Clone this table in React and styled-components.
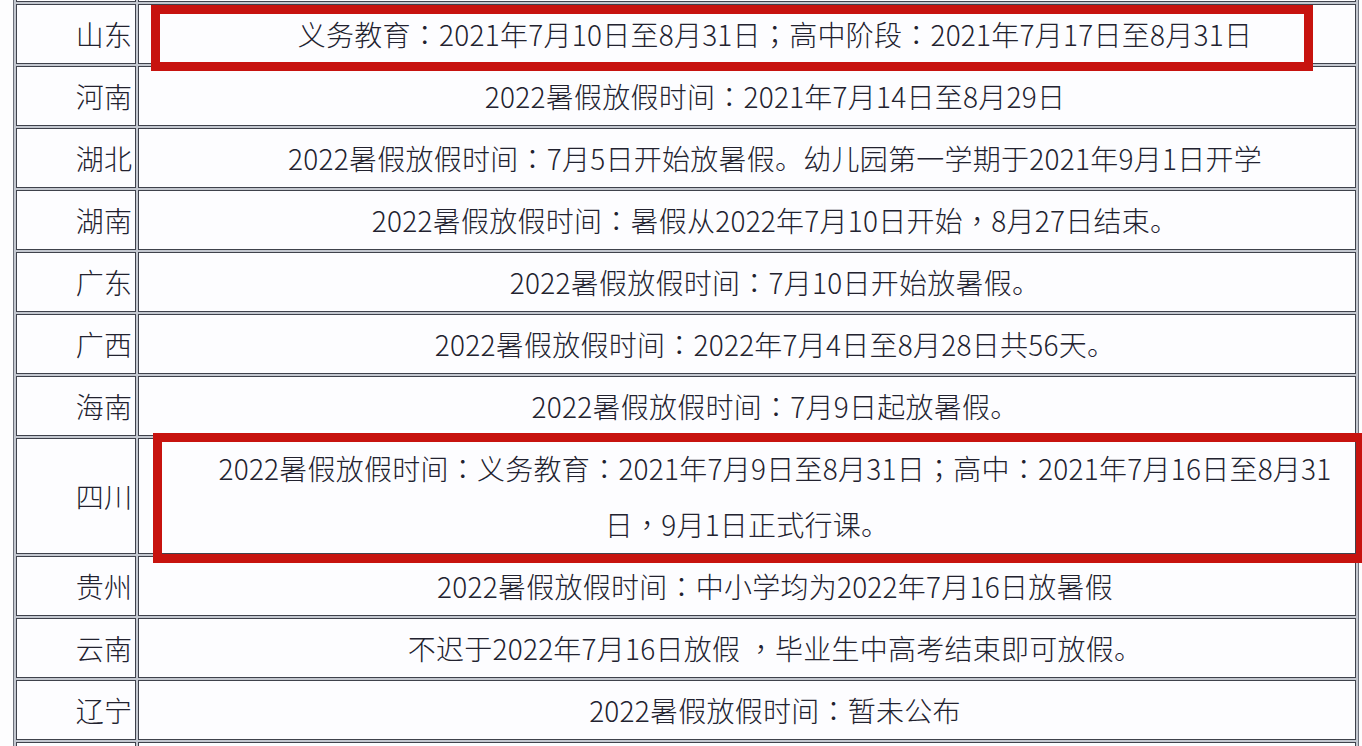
import React from "react";
import styled, { createGlobalStyle } from "styled-components";

const Global = createGlobalStyle`
  html, body {
    margin: 0;
    padding: 0;
    background: #fdfdfe;
    overflow: hidden;
  }
  body {
    width: 1362px;
    height: 746px;
    font-family: "Noto Sans CJK SC", "Noto Sans", sans-serif;
  }
`;

const Page = styled.div`
  position: relative;
  width: 1362px;
  height: 746px;
  overflow: hidden;
`;

const Table = styled.table`
  margin: -61px 0 0 13px;
  width: 1346px;
  border: 1px solid #6d717c;
  border-collapse: separate;
  border-spacing: 2px;
  background: #c3c7cf;
  table-layout: fixed;
`;

const Cell = styled.td`
  box-sizing: border-box;
  width: ${(p) => (p.$narrow ? "120px" : "auto")};
  height: 60px;
  padding: 1px;
  border: 1px solid #3f424c;
  background: #fdfdff;
  color: #22222f;
  font-size: 28px;
  font-weight: 300;
  letter-spacing: 0.25px;
  line-height: 56px;
  text-align: center;
  text-indent: 2em;
  vertical-align: middle;
`;

const Punct = styled.span`
  font-family: "Noto Sans CJK TC", "Noto Sans CJK SC", sans-serif;
`;

const Mark = styled.div`
  position: absolute;
  box-sizing: border-box;
  left: ${(p) => p.$x}px;
  top: ${(p) => p.$y}px;
  width: ${(p) => p.$w}px;
  height: ${(p) => p.$h}px;
  border: 9px solid #c7130f;
  pointer-events: none;
`;

const rows = [
  ["山东", "义务教育：2021年7月10日至8月31日；高中阶段：2021年7月17日至8月31日"],
  ["河南", "2022暑假放假时间：2021年7月14日至8月29日"],
  ["湖北", "2022暑假放假时间：7月5日开始放暑假。幼儿园第一学期于2021年9月1日开学"],
  ["湖南", "2022暑假放假时间：暑假从2022年7月10日开始，8月27日结束。"],
  ["广东", "2022暑假放假时间：7月10日开始放暑假。"],
  ["广西", "2022暑假放假时间：2022年7月4日至8月28日共56天。"],
  ["海南", "2022暑假放假时间：7月9日起放暑假。"],
  ["四川", "2022暑假放假时间：义务教育：2021年7月9日至8月31日；高中：2021年7月16日至8月31日，9月1日正式行课。"],
  ["贵州", "2022暑假放假时间：中小学均为2022年7月16日放暑假"],
  ["云南", "不迟于2022年7月16日放假 ，毕业生中高考结束即可放假。"],
  ["辽宁", "2022暑假放假时间：暂未公布"],
];

function Text({ children }) {
  const parts = children.split(/([：；，])/);
  return parts.map((s, i) =>
    /^[：；，]$/.test(s) ? <Punct key={i}>{s}</Punct> : <React.Fragment key={i}>{s}</React.Fragment>
  );
}

export default function App() {
  return (
    <>
      <Global />
      <Page>
        <Table>
          <tbody>
            <tr>
              <Cell $narrow />
              <Cell />
            </tr>
            {rows.map(([prov, text]) => (
              <tr key={prov}>
                <Cell $narrow>{prov}</Cell>
                <Cell>
                  <Text>{text}</Text>
                </Cell>
              </tr>
            ))}
            <tr>
              <Cell $narrow />
              <Cell />
            </tr>
          </tbody>
        </Table>
        <Mark $x={151} $y={5} $w={1162} $h={66} />
        <Mark $x={153} $y={433} $w={1212} $h={130} />
      </Page>
    </>
  );
}
